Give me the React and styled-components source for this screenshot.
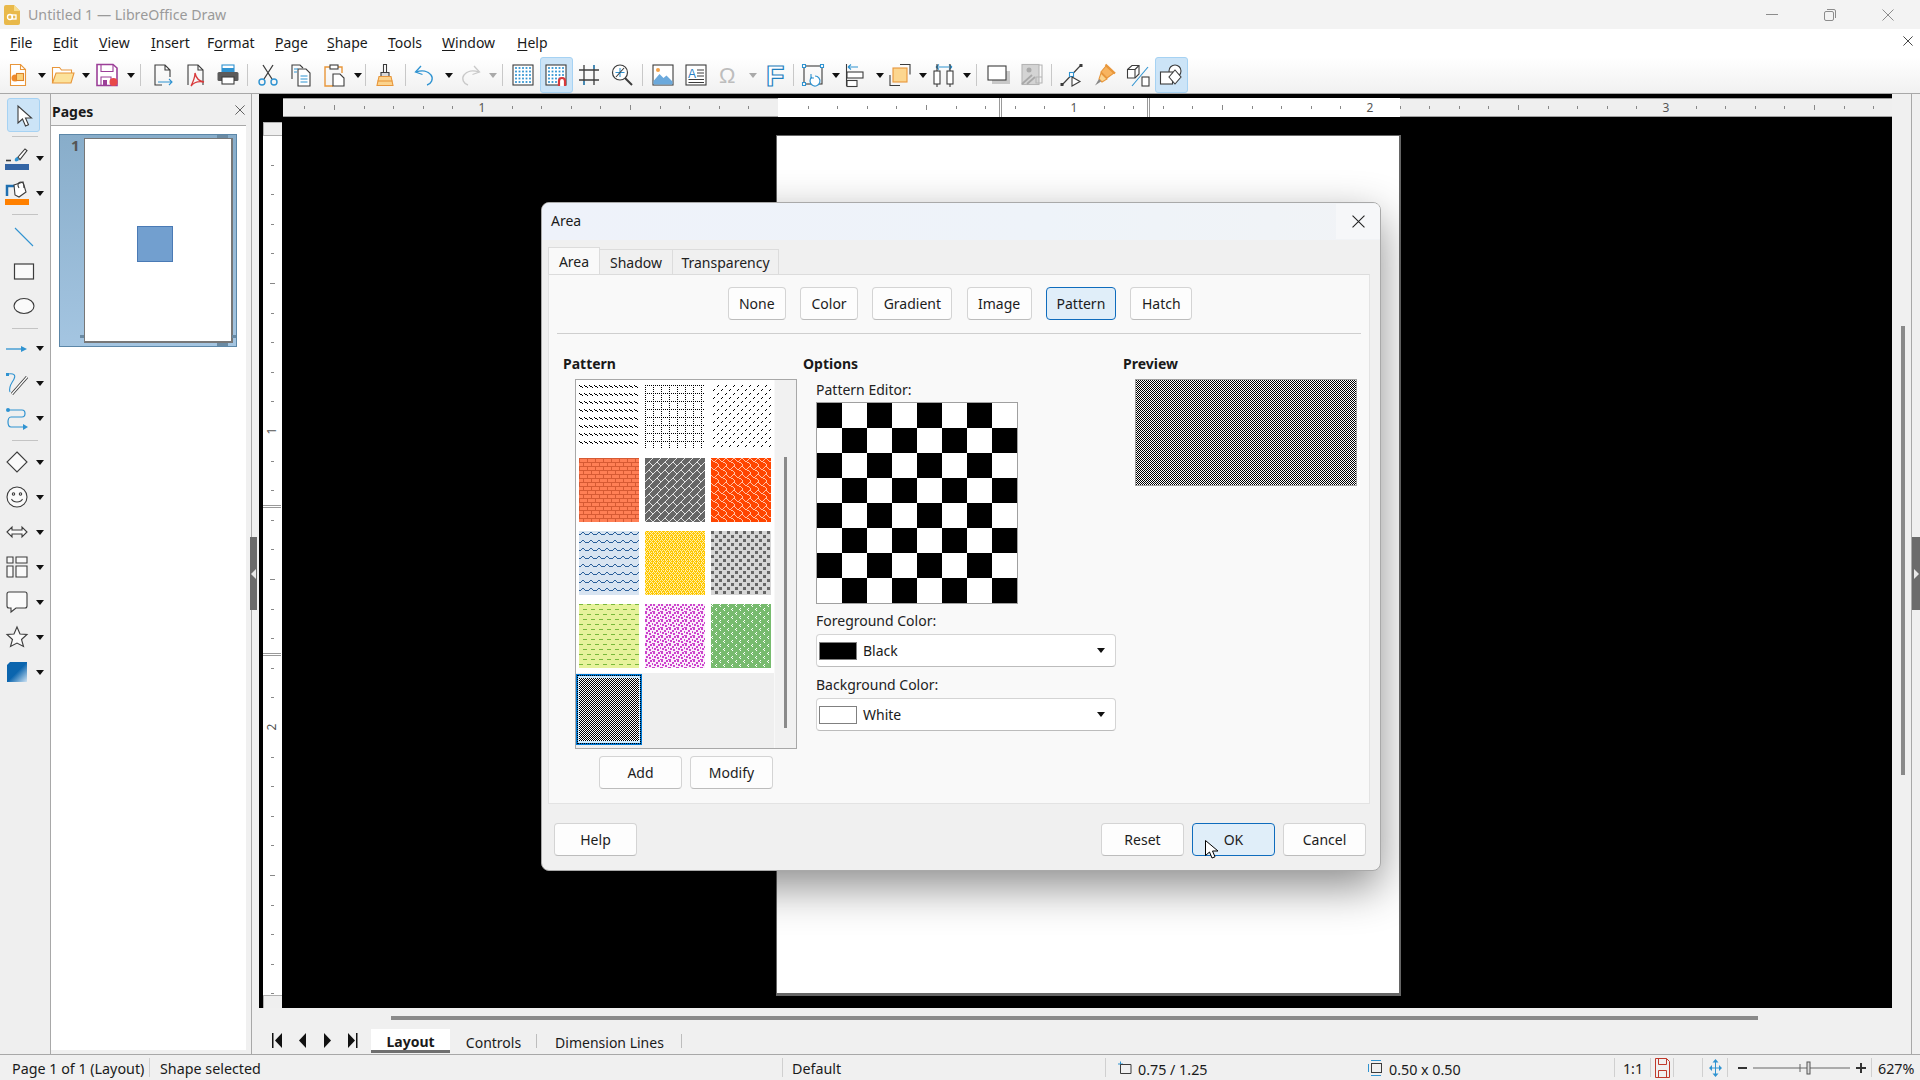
import React from 'react';
import styled, { createGlobalStyle } from 'styled-components';

const GlobalStyle = createGlobalStyle`
  html, body {
    margin: 0;
    padding: 0;
    overflow: hidden;
    background: #f0f0f0;
    font-family: "Noto Sans", "Open Sans", sans-serif;
    color: #1a1a1a;
  }
  * { box-sizing: border-box; }
`;

const DARK = '#3c3c3c';
const BLUE = '#2f93d1';
const ORANGE = '#e8963a';

const Ic = ({ children, w = 24, h = 24 }) => (
  <svg width={w} height={h} viewBox="0 0 24 24" fill="none" strokeWidth="1.1" overflow="visible">{children}</svg>
);

const dots = [];
for (let x = 5; x <= 19; x += 3.5) for (let y = 5; y <= 19; y += 3.5) dots.push([x, y]);

const GridDots = () => (
  <>
    <rect x="2" y="2" width="20" height="20" fill="#fff" stroke={DARK} />
    {dots.map(([x, y]) => <rect key={`${x}-${y}`} x={x - 0.9} y={y - 0.9} width="1.8" height="1.8" fill={BLUE} />)}
  </>
);

const icons = {
  new: <Ic><path d="M4.5 1.5h10l5 5v16h-15z" fill="#fff" stroke={ORANGE} /><path d="M14.5 1.5v5h5" stroke={ORANGE} /><circle cx="9" cy="15" r="3.5" fill="#ef8b2c" /><rect x="10.5" y="10.5" width="7" height="7" fill="#fcd27b" stroke="#dd8429" /></Ic>,
  open: <Ic><path d="M1.5 20V4.5h7l2 2.5h10v3" fill="#fff" stroke={ORANGE} /><path d="M1.5 20 5 10h18l-3 10z" fill="#fce29b" stroke={ORANGE} /></Ic>,
  save: <Ic><path d="M2 1.5h16l4 3.5v17.5H2z" fill="#fff" stroke="#9c3f98" strokeWidth="1.6" /><path d="M6 2v6.5h12V2M6 22v-8h10v8" stroke="#9c3f98" /><rect x="8" y="17" width="4" height="5" fill="#9c3f98" /><circle cx="18.5" cy="19" r="4" fill="#e8484a" /></Ic>,
  export: <Ic><path d="M12 22H5V2h10l5 5v7M15 2v5h5" stroke={DARK} /><path d="M8 19h14m-3-3 3 3-3 3" stroke={BLUE} /></Ic>,
  pdf: <Ic><path d="M5 22V2h10l5 5v15" stroke={DARK} /><path d="M15 2v5h5" stroke={DARK} /><path d="M12 10c1 5 3 8 9 9-5-1-10 0-13 4 2-4 4-8 4-13z" stroke="#d8393b" strokeWidth="1.3" /></Ic>,
  print: <Ic><rect x="6" y="2" width="12" height="7" fill="#fff" stroke={BLUE} /><path d="M6 5h12v4H6z" fill={BLUE} /><rect x="1.5" y="9" width="21" height="9" rx="1.5" fill="#5a5a5a" /><rect x="6" y="14" width="12" height="7" fill="#fff" stroke={DARK} /></Ic>,
  cut: <Ic><path d="M8 16 17 2M16 16 7 2" stroke={DARK} strokeWidth="1.3" /><circle cx="6" cy="19" r="3" stroke={BLUE} strokeWidth="1.4" /><circle cx="18" cy="19" r="3" stroke={BLUE} strokeWidth="1.4" /></Ic>,
  copy: <Ic><path d="M3 16V2h8l3 3" stroke={DARK} /><path d="M9 6h8l4 4v13H9z" fill="#fff" stroke={DARK} /><path d="M11.5 13h7M11.5 16h7M11.5 19h7M5 6h4M5 9h3" stroke={BLUE} /></Ic>,
  paste: <Ic><path d="M8 4H3v19h8" stroke={ORANGE} strokeWidth="1.4" /><path d="M16 4h4v6" stroke={ORANGE} strokeWidth="1.4" /><rect x="8" y="2" width="8" height="4" fill="#fff" stroke={DARK} /><path d="M11 11h7l4 4v8H11z" fill="#fff" stroke={DARK} /></Ic>,
  clone: <Ic><path d="M10.5 1.5h3v8h-3z" fill="#fff" stroke={DARK} /><path d="M8 9.5h8v4H8z" fill="#d9d9d9" stroke={DARK} /><path d="M6 13.5h12l2 9H4z" fill="#fbd38d" stroke={ORANGE} /><path d="M4.5 18h15" stroke={ORANGE} /></Ic>,
  undo: <Ic><path d="M8 3 2.5 9l7 2.5" stroke={BLUE} strokeWidth="1.3" /><path d="M3 9c6-2 12-1 15 3s0 9-4 10" stroke={BLUE} strokeWidth="1.3" /></Ic>,
  redo: <Ic><path d="m16 3 5.500 6-7 2.500" stroke="#c9c9c9" strokeWidth="1.3" /><path d="M21 9c-6-2-12-1-15 3s0 9 4 10" stroke="#c9c9c9" strokeWidth="1.3" /></Ic>,
  grid: <Ic><GridDots /></Ic>,
  snap: <Ic><GridDots /><path d="M15 23v-5a3 3 0 0 1 6 0v5" stroke="#d8393b" strokeWidth="2.200" fill="#fff" /></Ic>,
  help: <Ic><path d="M2 7h20M2 17h20" stroke={DARK} strokeWidth="1.300" /><path d="M7 2v20M17 2v20" stroke={DARK} strokeWidth="1.300" /><path d="M7 18v4M17 2v4" stroke={BLUE} strokeWidth="1.300" /></Ic>,
  zoom: <Ic><circle cx="10" cy="9.500" r="7.500" fill="#fff" stroke={DARK} strokeWidth="1.200" /><path d="m15 15 7 7" stroke={DARK} strokeWidth="2" /><path d="M5.500 9.500h9M10 5v9" stroke={BLUE} /><path d="m6 14 8-9" stroke={DARK} /></Ic>,
  image: <Ic><rect x="2" y="2" width="20" height="20" fill="#fff" stroke={DARK} /><circle cx="7" cy="7" r="2" fill="#f4a24a" /><path d="M2.500 21.500V18l6-7 4 4 3-2.500 6 6v3z" fill="#6ba9dc" /></Ic>,
  text: <Ic><rect x="2" y="2" width="20" height="20" fill="#fff" stroke={DARK} /><text x="4" y="15" fontFamily="Liberation Sans" fontSize="12" fill="#2a7fc4">A</text><path d="M13 7h7M13 10h7M13 13h7M4.500 16.500h15.500M4.500 19.500h15.500" stroke={DARK} /></Ic>,
  omega: <Ic><text x="2" y="20" fontFamily="Liberation Sans" fontSize="22" fill="#bdbdbd">Ω</text></Ic>,
  font: <Ic><text x="4" y="23" fontFamily="Liberation Sans" fontWeight="700" fontSize="30" fill="#fff" stroke="#1f7fbf" strokeWidth="1.200">F</text></Ic>,
  transform: <Ic><rect x="3" y="3" width="18" height="18" stroke={DARK} /><path d="M1.500 1.500h3v3h-3zM19.500 1.500h3v3h-3zM1.500 19.500h3v3h-3z" fill="#fff" stroke={BLUE} /><path d="M14 13a5 5 0 1 1-3 1" stroke={BLUE} strokeWidth="1.200" fill="#fff" /><path d="M10 11v4h3" stroke={BLUE} /></Ic>,
  align: <Ic><path d="M1.500 1v22" stroke={DARK} /><path d="M3 4h10M3 4l3-2.500M3 4l3 2.500" stroke={BLUE} /><rect x="2" y="9" width="16" height="6" fill="#fff" stroke={DARK} /><rect x="2" y="17.500" width="10" height="6" fill="#fff" stroke={DARK} /></Ic>,
  arrange: <Ic><path d="M12 1.500h10v10M2 12v10.500h10" stroke={DARK} /><rect x="5" y="5" width="14" height="14" fill="#fcd68f" stroke={ORANGE} /></Ic>,
  distribute: <Ic><rect x="2" y="8" width="6" height="13" fill="#fff" stroke={DARK} /><rect x="15" y="8" width="6" height="13" fill="#fff" stroke={DARK} /><path d="M5 21v3M18 21v3" stroke={DARK} /><path d="M4 4h16M4 4l3-2.500M4 4l3 2.500M20 4l-3-2.500M20 4l-3 2.500" stroke={BLUE} /><path d="M5 1v7M18 1v7" stroke={DARK} /></Ic>,
  shadow: <Ic><path d="M6 8h18v13H6z" fill="#c8c8c8" /><rect x="2" y="3" width="18" height="14" fill="#fff" stroke={DARK} /></Ic>,
  crop: <Ic><rect x="3" y="1.500" width="17" height="20" fill="#d4d4d4" stroke="#b5b5b5" /><path d="M3 21 13 12M8 21l8-7" stroke="#a8a8a8" strokeWidth="1.800" /><circle cx="10" cy="7" r="2.500" fill="#aaa" /><path d="M17 14h6v6h-6zM20 2h3v12" stroke="#b5b5b5" /></Ic>,
  points: <Ic><path d="M2 22 21 2" stroke={DARK} /><rect x="0.500" y="20" width="3" height="3" fill={DARK} /><rect x="19.500" y="1" width="3" height="3" fill={DARK} /><rect x="9.500" y="9.500" width="4" height="4" fill="#fff" stroke={BLUE} /><path d="M12 14v9l8-4.500z" fill="#fff" stroke={DARK} /></Ic>,
  glue: <Ic><path d="m13 3 8 7-7 5-6-6z" fill="#f8b45f" stroke={ORANGE} /><path d="m12.500 1.500 9.500 9" stroke={ORANGE} strokeWidth="2.200" /><path d="m8 10 6 6-5 3-3-3z" fill="#fbd38d" stroke={ORANGE} /><path d="m6 16-4 6.500 6-4z" fill="#888" /></Ic>,
  extrusion: <Ic><path d="M1.500 6.500 6 2.500h7v8.500l-4 4H1.500z" fill="#fff" stroke={DARK} /><path d="M1.500 6.500H9V15M9 6.500l4-4" stroke={DARK} /><path d="M22 4 6 23" stroke={BLUE} /><rect x="16" y="14" width="7" height="9" fill="#fff" stroke={DARK} /></Ic>,
  shapes: <Ic><circle cx="16" cy="8" r="6" fill="#fff" stroke={DARK} /><rect x="1.500" y="9" width="12" height="12" fill="#fff" stroke={DARK} /><path d="m16 7 6 7-6 7-6-7z" fill="#fff" stroke={DARK} /></Ic>,
  pointer: <Ic><path d="M6 2v17l4.500-4 3 7 3-1.300-3-6.700h6z" fill="#fff" stroke={DARK} /></Ic>,
  lineColor: <Ic><rect x="0" y="18" width="24" height="6" fill="#3465a4" /><path d="M1 14.500h5" stroke={DARK} strokeWidth="1.600" /><path d="M10 15c-1-2 1-4 3-4l1 3c-1 1-3 2-4 1z" fill={BLUE} /><path d="m13 11 7-8 2 1.500-7 9z" fill="#fff" stroke={DARK} /></Ic>,
  fillColor: <Ic><rect x="0" y="18" width="24" height="6" fill="#ff8000" /><path d="M2 15V5h8" stroke="#1f6fb0" strokeWidth="2.500" /><path d="M9 4 18 1l3 10-7 5-4-2z" fill="#fff" stroke={DARK} /><path d="M14 7c-2-3-1-6 2-6s3 3 3 6" stroke={DARK} /></Ic>,
  line: <Ic><path d="m3 3 18 18" stroke={BLUE} /></Ic>,
  rect: <Ic><rect x="2.500" y="4" width="19" height="15" fill="#fafafa" stroke={DARK} strokeWidth="1.200" /></Ic>,
  ellipse: <Ic><ellipse cx="12" cy="11" rx="10" ry="7.500" fill="#fafafa" stroke={DARK} strokeWidth="1.100" /></Ic>,
  arrow: <Ic><path d="M1 12h16" stroke={BLUE} strokeWidth="1.300" /><path d="m16 9 6 3-6 3z" fill={BLUE} /></Ic>,
  curve: <Ic><path d="M3 2c6-1 8 1 6 5s-6 8-4 13" stroke={BLUE} /><rect x="1" y="1" width="3" height="3" fill={BLUE} /><path d="m7 22 15-17" stroke={DARK} strokeWidth="3" /><path d="m7 22 15-17" stroke="#fff" strokeWidth="1.300" /></Ic>,
  connector: <Ic><circle cx="3" cy="3" r="2" fill={BLUE} /><path d="M3 3h14c4 0 4 7 0 7H6c-4 0-4 10 0 10h14" stroke={BLUE} strokeWidth="1.200" /><path d="m18 17 5 3-5 3z" fill={BLUE} /></Ic>,
  diamond: <Ic><path d="m12 2 10 10-10 10L2 12z" fill="#fafafa" stroke={DARK} /></Ic>,
  smile: <Ic><circle cx="12" cy="12" r="10" fill="#fafafa" stroke={DARK} /><circle cx="8.500" cy="9" r="1.200" stroke={DARK} /><circle cx="15.500" cy="9" r="1.200" stroke={DARK} /><path d="M6.500 14c2 4 9 4 11 0" stroke={DARK} /></Ic>,
  dblArrow: <Ic><path d="M2 12 7 7v3h10V7l5 5-5 5v-3H7v3z" fill="#fafafa" stroke={DARK} /></Ic>,
  flow: <Ic><path d="M2 2h6v6H2zM11 2h11v6H11zM2 11h6v11H2zM11 11h11v11H11z" fill="#fafafa" stroke={DARK} /></Ic>,
  callout: <Ic><path d="M4 2h16a2 2 0 0 1 2 2v12a2 2 0 0 1-2 2H11l-5 4v-4H4a2 2 0 0 1-2-2V4a2 2 0 0 1 2-2z" fill="#fafafa" stroke={DARK} /></Ic>,
  star: <Ic><path d="m12 2 3 7 7 .500-5.500 5 2 7L12 18l-6.500 3.500 2-7L2 9.500 9 9z" fill="#fafafa" stroke={DARK} /></Ic>,
  cube: (
    <Ic>
      <defs>
        <linearGradient id="cubeFill" x1="0" y1="0" x2="1" y2="1">
          <stop offset="0.500" stopColor="#0b65ae" />
          <stop offset="1" stopColor="#cfe3f3" />
        </linearGradient>
      </defs>
      <path d="M5 2h17v20H2V5z" fill="url(#cubeFill)" />
    </Ic>
  ),
};

const TitleBar = styled.div`
  height: 29px;
  background: #f3f3f3;
  display: flex;
  align-items: center;
  padding-left: 4px;
  flex: none;
`;
const AppTitle = styled.span`
  margin-left: 8px;
  font-size: 14.2px;
  color: #9a9a9a;
`;
const WinControls = styled.div`
  margin-left: auto;
  display: flex;
  padding-right: 3px;
`;
const WinButton = styled.div`
  width: 58px;
  height: 29px;
  display: flex;
  align-items: center;
  justify-content: center;
`;

const MenuBar = styled.div`
  height: 28px;
  background: #fff;
  display: flex;
  align-items: center;
  position: relative;
  flex: none;
  padding: 0 0 2px 3px;
`;
const MenuItem = styled.span`
  font-size: 14px;
  padding: 0 7px;
  color: #1a1a1a;
  width: ${(p) => p.$w}px;
  white-space: nowrap;
  u { text-underline-offset: 2px; text-decoration-thickness: 1px; }
`;
const DocClose = styled.div`
  position: absolute;
  right: 7px;
  top: 7px;
  display: flex;
`;

const ToolBar = styled.div`
  height: 37px;
  background: linear-gradient(#ffffff, #f1f1f1);
  border-bottom: 1px solid #a8a8a8;
  display: flex;
  align-items: center;
  padding-left: 1.500px;
  flex: none;
`;
const TBtn = styled.div`
  width: 33px;
  height: 36px;
  flex: none;
  display: flex;
  align-items: center;
  justify-content: center;
  border-radius: 3px;
  ${(p) => p.$active && 'background: #cce4f7; border: 1px solid #a6d2f3;'}
`;
const Caret = styled.div`
  width: ${(p) => p.$w || 11.500}px;
  flex: none;
  display: flex;
  justify-content: center;
  padding-left: 3px;
  &::after {
    content: "";
    border-left: 4px solid transparent;
    border-right: 4px solid transparent;
    border-top: 5px solid ${(p) => (p.$off ? '#a9a9a9' : '#111')};
  }
`;
const TSep = styled.div`
  width: 1px;
  height: 22px;
  flex: none;
  margin: 0 ${(p) => p.$m || 4.500}px;
  background: #c8c8c8;
`;

const Main = styled.div`
  flex: 1;
  display: flex;
  min-height: 0;
`;
const LeftBar = styled.div`
  width: 51px;
  flex: none;
  background: #efefef;
  border-right: 1px solid #a8a8a8;
  display: flex;
  flex-direction: column;
  padding-top: 4px;
`;
const SelectTool = styled.div`
  width: 33px;
  height: 34px;
  flex: none;
  margin-left: 7px;
  background: #cce4f7;
  border: 1px solid #a6d2f3;
  border-radius: 3px;
  display: flex;
  align-items: center;
  justify-content: center;
  padding-top: 1px;
`;
const LeftItem = styled.div`
  height: 35px;
  flex: none;
  display: flex;
  align-items: center;
  padding-left: ${(p) => (p.$center ? 12 : 5)}px;
`;
const LeftCaret = styled.div`
  margin-left: 7px;
  &::after {
    content: "";
    display: block;
    border-left: 4px solid transparent;
    border-right: 4px solid transparent;
    border-top: 5px solid #111;
  }
`;
const LeftSep = styled.div`
  height: 1px;
  flex: none;
  margin: ${(p) => p.$top}px 12px ${(p) => p.$bottom}px;
  background: #c4c4c4;
`;

const Sidebar = styled.div`
  width: 201px;
  flex: none;
  background: #f0f0f0;
  border-right: 1px solid #a8a8a8;
  display: flex;
  flex-direction: column;
`;
const SideHead = styled.div`
  height: 31px;
  display: flex;
  align-items: center;
  justify-content: space-between;
  padding: 0 6px 0 1px;
  font-size: 14px;
  font-weight: 700;
`;
const SideTitle = styled.span`
  margin-top: 3px;
`;
const SideList = styled.div`
  width: 195px;
  height: 925px;
  background: #fff;
  border-top: 1px solid #a8a8a8;
  padding: 8px 0 0 8px;
`;
const ThumbSel = styled.div`
  width: 178px;
  height: 213px;
  background: linear-gradient(#88adca, #a4c5e1);
  border: 1px solid #5c87a8;
  padding: 3px 4px 0 24px;
  position: relative;
`;
const ThumbNum = styled.span`
  position: absolute;
  left: 11px;
  top: 0;
  font-size: 15px;
  font-weight: 700;
  color: #555;
`;
const ThumbPage = styled.div`
  width: 149px;
  height: 205px;
  background: #fff;
  border: 1px solid #777;
  border-width: 1px 2px 2px 1px;
  display: flex;
  align-items: center;
  justify-content: center;
`;
const ThumbShape = styled.div`
  width: 36px;
  height: 36px;
  background: #729fcf;
  border: 1px solid #4a7ab5;
  margin: 7px 0 0 -6px;
`;
const ThumbMark = styled.div`
  position: absolute;
  left: ${(p) => p.$x}px;
  top: ${(p) => p.$y}px;
  width: ${(p) => p.$w}px;
  height: ${(p) => p.$h}px;
  background: #6a8aa3;
`;

const Workspace = styled.div`
  flex: 1;
  display: flex;
  flex-direction: column;
  padding-left: 7px;
  min-width: 0;
  background: #f0f0f0;
`;
const BlackArea = styled.div`
  height: 914px;
  background: #000;
  display: flex;
  flex-direction: column;
  padding-top: 4px;
  flex: none;
`;
const HRulerWrap = styled.div`
  margin-left: 24px;
  height: 19px;
  flex: none;
  display: flex;
`;
const CanvasRow = styled.div`
  flex: 1;
  margin-top: 5px;
  display: flex;
  padding-left: 4px;
  min-height: 0;
`;
const VRulerWrap = styled.div`
  width: 19px;
  flex: none;
  display: flex;
`;
const Canvas = styled.div`
  flex: 1;
  position: relative;
`;
const PageSheet = styled.div`
  position: absolute;
  left: 494px;
  top: 13px;
  width: 625px;
  height: 861px;
  background: #fff;
  border: 1px solid #666;
  border-width: 1px 2px 3px 1px;
`;
const HScrollRow = styled.div`
  height: 21px;
  flex: none;
  padding: 8px 0 0 132px;
`;
const HThumb = styled.div`
  width: 1367px;
  height: 4px;
  background: #8a8a8a;
`;
const TabsRow = styled.div`
  height: 25px;
  display: flex;
  flex: none;
  padding-left: 5.500px;
`;
const NavBtn = styled.div`
  width: 25px;
  display: flex;
  align-items: center;
  justify-content: center;
  padding-bottom: 3px;
`;
const SheetTab = styled.div`
  width: ${(p) => p.$w}px;
  font-size: 14px;
  display: flex;
  align-items: center;
  justify-content: center;
  ${(p) => (p.$active
    ? 'margin: 0 0 1px 6.500px; padding-top: 3px; background: #fff; font-weight: 700; border-bottom: 3px solid #6f6f6f;'
    : `padding-top: 1px; position: relative;
       &::after { content: ""; position: absolute; right: 0; top: 5px; height: 14px; width: 1px; background: #bdbdbd; }`)}
`;
const RightStrip = styled.div`
  width: 28px;
  flex: none;
  background: #f0f0f0;
  display: flex;
`;
const VScrollTrack = styled.div`
  width: 20px;
  flex: none;
  border-right: 1px solid #a8a8a8;
  padding: 232px 0 0 9px;
`;
const VThumb = styled.div`
  width: 4px;
  height: 449px;
  background: #8a8a8a;
`;
const Handle = styled.div`
  position: absolute;
  top: 537px;
  left: ${(p) => p.$left}px;
  width: ${(p) => p.$wide}px;
  height: 73px;
  background: #6b6b6b;
  display: flex;
  align-items: center;
  justify-content: center;
  &::after {
    content: "";
    border-top: 5px solid transparent;
    border-bottom: 5px solid transparent;
    ${(p) => (p.$right ? 'border-left: 5px solid #e8e8e8;' : 'border-right: 5px solid #e8e8e8;')}
  }
`;

const StatusBar = styled.div`
  height: 26px;
  flex: none;
  background: #f0f0f0;
  border-top: 1px solid #a8a8a8;
  display: flex;
  font-size: 14.3px;
  padding-top: 1px;
`;
const StatusCell = styled.div`
  width: ${(p) => p.$w}px;
  flex: none;
  display: flex;
  align-items: center;
  justify-content: ${(p) => p.$justify || 'flex-start'};
  padding-left: ${(p) => p.$pad || 0}px;
  gap: ${(p) => p.$gap || 0}px;
  position: relative;
  white-space: nowrap;
  ${(p) => !p.$noLine && `
    &::after { content: ""; position: absolute; right: 0; top: 2px; bottom: 3px; width: 1px; background: #d0d0d0; }
  `}
`;
const Coord = styled.span`
  margin-top: 3px;
`;

const Dialog = styled.div`
  position: absolute;
  left: 541px;
  top: 202px;
  width: 840px;
  height: 669px;
  background: #f0f0f0;
  border-radius: 8px;
  border: 1px solid #a9a9a9;
  box-shadow: 0 16px 44px rgba(0, 0, 0, 0.45);
  display: flex;
  flex-direction: column;
  overflow: hidden;
`;
const DlgTitle = styled.div`
  height: 37px;
  flex: none;
  display: flex;
  align-items: center;
  justify-content: space-between;
  padding-left: 9px;
  font-size: 14px;
  background: linear-gradient(90deg, #eef2fa, #eef3f9 60%, #f1f3f6);
`;
const DlgTitleText = styled.span`
  margin-bottom: 2px;
`;
const DlgClose = styled.div`
  width: 44px;
  height: 35px;
  display: flex;
  align-items: center;
  justify-content: center;
  background: #f6f7f9;
`;
const DlgBody = styled.div`
  flex: 1;
  padding: 7px 10px 0 6px;
  display: flex;
  flex-direction: column;
`;
const TabRow = styled.div`
  display: flex;
  align-items: flex-end;
  height: 27px;
  flex: none;
`;
const DlgTab = styled.div`
  width: ${(p) => p.$w}px;
  height: ${(p) => (p.$active ? 27 : 25)}px;
  background: ${(p) => (p.$active ? '#f9f9f9' : '#f0f0f0')};
  border: 1px solid #dcdcdc;
  border-bottom: none;
  border-left: ${(p) => (p.$active ? '1px solid #dcdcdc' : 'none')};
  font-size: 14px;
  display: flex;
  align-items: center;
  justify-content: center;
  color: #222;
`;
const TabPanel = styled.div`
  height: 530px;
  flex: none;
  background: #f9f9f9;
  border: 1px solid #e3e3e3;
  border-top-color: #dcdcdc;
  padding-top: 12px;
  display: flex;
  flex-direction: column;
`;
const TypeRow = styled.div`
  display: flex;
  justify-content: center;
  gap: 14.300px;
  padding-left: 2px;
`;
const Btn = styled.div`
  width: ${(p) => p.$w}px;
  height: 33px;
  flex: none;
  border-radius: 4px;
  font-size: 14px;
  display: flex;
  align-items: center;
  justify-content: center;
  color: #1c1c1c;
  background: ${(p) => (p.$active ? '#e0eef9' : '#fdfdfd')};
  border: 1px solid ${(p) => (p.$active ? '#0f6cbd' : '#d4d4d4')};
  border-bottom-color: ${(p) => (p.$active ? '#0f6cbd' : '#bcbcbc')};
`;
const HLine = styled.div`
  height: 1px;
  background: #cfcfcf;
  margin: 13px 8px 0;
  flex: none;
`;
const Columns = styled.div`
  display: grid;
  grid-template-columns: 240px 320px 1fr;
  padding: 19px 0 0 14px;
`;
const Heading = styled.div`
  height: 20px;
  display: flex;
  align-items: center;
  font-size: 14px;
  font-weight: 700;
`;
const PatternList = styled.div`
  width: 222px;
  height: 370px;
  margin: 6px 0 0 12px;
  border: 1px solid #a8a8a8;
  background: #efefef;
  display: flex;
`;
const ValueSet = styled.div`
  width: 198px;
  flex: none;
`;
const TileGrid = styled.div`
  background: #fff;
  padding: 5px 3px;
  display: grid;
  grid-template-columns: repeat(3, 60px);
  grid-auto-rows: 64px;
  gap: 9px 6px;
`;
const SelectedTile = styled.div`
  width: 66px;
  height: 71px;
  margin-top: 1px;
  border: 2px solid #0078d4;
  outline: 1px dotted #000;
  outline-offset: -2px;
  padding: 2px 1px;
  background: #cfeafc;
  display: flex;
  overflow: hidden;
`;
const ListScroll = styled.div`
  flex: 1;
  background: #f1f1f1;
  border-left: 1px solid #f8f8f8;
  padding: 77px 0 0 9px;
`;
const ListThumb = styled.div`
  width: 3px;
  height: 271px;
  background: #8a8a8a;
`;
const ListButtons = styled.div`
  display: flex;
  gap: 8px;
  margin: 7px 0 0 36px;
`;
const Options = styled.div`
  padding: 6px 0 0 13px;
`;
const FieldLabel = styled.div`
  height: 20px;
  font-size: 14px;
  display: flex;
  align-items: center;
  color: #222;
  margin-top: ${(p) => p.$mt || 0}px;
`;
const EditorGrid = styled.div`
  width: 202px;
  height: 202px;
  margin-top: 3px;
  border: 1px solid #a0a0a0;
  display: grid;
  grid-template-columns: repeat(8, 1fr);
  grid-template-rows: repeat(8, 1fr);
`;
const EditorCell = styled.div`
  background: ${(p) => (p.$on ? '#000' : '#fff')};
`;
const ColorBox = styled.div`
  width: 300px;
  height: 33px;
  margin-top: 4px;
  background: #fff;
  border: 1px solid #d4d4d4;
  border-bottom-color: #bcbcbc;
  border-radius: 4px;
  display: flex;
  align-items: center;
  padding: 0 10px 0 2px;
  font-size: 14px;
  gap: 6px;
`;
const Swatch = styled.div`
  width: 38px;
  height: 18px;
  background: ${(p) => p.$color};
  border: 1px solid #808080;
`;
const BoxCaret = styled.div`
  margin-left: auto;
  &::after {
    content: "";
    display: block;
    border-left: 4.500px solid transparent;
    border-right: 4.500px solid transparent;
    border-top: 5px solid #111;
  }
`;
const PreviewCol = styled.div`
  display: flex;
  flex-direction: column;
`;
const PreviewBox = styled.div`
  margin: 6px 0 0 12px;
  width: 222px;
  height: 107px;
  border: 1px solid #a0a0a0;
  display: flex;
`;
const DlgFooter = styled.div`
  flex: 1;
  display: flex;
  align-items: flex-start;
  padding: 19px 4px 0 6px;
  gap: 8px;
`;
const FooterSpacer = styled.div`
  flex: 1;
`;
const MouseCursor = styled.div`
  position: absolute;
  left: 1205px;
  top: 840px;
  display: flex;
`;
const Root = styled.div`
  position: relative;
  width: 1920px;
  height: 1080px;
  display: flex;
  flex-direction: column;
  overflow: hidden;
  background: #f0f0f0;
`;

// bitmaps for the pattern value set, # = foreground
const PATTERNS = [
  { id: 'p1', fg: '#000', bg: '#fff', bits: ['#....', '.##..', '...#.', '.....', '.....', '.....', '.....', '.....'] },
  { id: 'p2', fg: '#000', bg: '#fff', bits: ['#.#.#.#.', '........', '#.......', '........', '#.......', '........', '#.......', '........'] },
  { id: 'p3', fg: '#000', bg: '#fff', bits: ['.......#', '......#.', '........', '........', '...#....', '..#.....', '........', '........'] },
  { id: 'p4', fg: '#d65a33', bg: '#ff7f55', bits: ['########', '#.......', '#.......', '#.......', '########', '....#...', '....#...', '....#...'] },
  { id: 'p5', fg: '#e4e4e4', bg: '#666666', bits: ['.......#', '......#.', '.....#..', '....#...', '...##...', '..#..#..', '.#....#.', '#......#'] },
  { id: 'p6', fg: '#ffc2a8', bg: '#ff4500', bits: ['......##', '#....#..', '.#..#...', '..##....', '....##..', '......#.', '.......#', '.......#'] },
  { id: 'p7', fg: '#2a5f9a', bg: '#d8e4f1', bits: ['........', '...##...', '..#..#..', '##....##', '........', '........', '........', '........'] },
  { id: 'p8', fg: '#fff0b0', bg: '#ffc800', bits: ['#...#...', '.#.#.#.#', '..#...#.', '.#.#.#.#', '#...#...', '#.#.#.#.', '.#...#..', '#.#.#.#.'] },
  { id: 'p9', fg: '#666666', bg: '#d6d6d6', bits: ['###.....', '###.....', '###.....', '........', '....###.', '....###.', '....###.', '........'] },
  { id: 'p10', fg: '#79b93c', bg: '#e6f29b', bits: ['####....', '........', '........', '........', '........', '....####', '........', '........', '........', '........'] },
  { id: 'p11', fg: '#cc44cc', bg: '#fbeefb', bits: ['##...##.', '##...##.', '...##...', '...##..#', '.##....#', '.##.##..', '....##..', '##.....#'] },
  { id: 'p12', fg: '#ffffff', bg: '#77bb6e', bits: ['.#......', '#.......', '.#......', '........', '.....#..', '....#...', '.....#..', '........'] },
];
const CHECK = ['#.', '.#'];

const Tile = ({ id, fg, bg, bits, w = 60, h = 64 }) => (
  <svg width={w} height={h} shapeRendering="crispEdges">
    <defs>
      <pattern id={id} patternUnits="userSpaceOnUse" width={bits[0].length} height={bits.length}>
        <rect width={bits[0].length} height={bits.length} fill={bg} />
        {bits.flatMap((row, y) => [...row].map((c, x) => (c === '#' ? <rect key={`${x}-${y}`} x={x} y={y} width="1" height="1" fill={fg} /> : null)))}
      </pattern>
    </defs>
    <rect width={w} height={h} fill={`url(#${id})`} />
  </svg>
);

const HRuler = () => {
  const ticks = [];
  for (let k = -16; k <= 37; k++) ticks.push(k);
  const X = (k) => 495 + k * 29.6;
  return (
    <svg width="1609" height="19" shapeRendering="crispEdges">
      <rect width="1609" height="19" fill="#efefef" />
      <rect x="495" width="622" height="19" fill="#fff" />
      <path d="M0 0.500H495M1117 0.500H1609M0 18.500H495M1117 18.500H1609" stroke="#a0a0a0" />
      {ticks.map((k) => {
        if (k % 10 === 0 && k !== 0) {
          return <text key={k} x={X(k)} y="14" textAnchor="middle" fontSize="12" fontFamily="Noto Sans" fill="#555">{Math.abs(k / 10)}</text>;
        }
        if (k === 0) return null;
        const len = k % 5 === 0 ? 5 : 3;
        return <rect key={k} x={Math.round(X(k))} y={9 - Math.floor(len / 2)} width="1" height={len} fill="#888" />;
      })}
      <path d="M716.500 0V19M718.500 0V19M864.500 0V19M866.500 0V19" stroke="#999" />
    </svg>
  );
};

const VRuler = () => {
  const ticks = [];
  for (let k = 1; k <= 29; k++) ticks.push(k);
  const Y = (k) => 13 + k * 29.6;
  return (
    <svg width="19" height="886" shapeRendering="crispEdges">
      <rect width="19" height="886" fill="#fff" />
      <rect width="19" height="13" fill="#efefef" stroke="#b0b0b0" />
      <rect y="873" width="19" height="13" fill="#efefef" stroke="#b0b0b0" />
      {ticks.map((k) => {
        if (k % 10 === 0) {
          const y = Y(k);
          return <text key={k} x="9" y={y} transform={`rotate(-90 9 ${y})`} dy="4" textAnchor="middle" fontSize="12" fontFamily="Noto Sans" fill="#555">{k / 10}</text>;
        }
        const len = k % 5 === 0 ? 5 : 3;
        return <rect key={k} x={9 - Math.floor(len / 2)} y={Math.round(Y(k))} width={len} height="1" fill="#888" />;
      })}
      <path d="M0 383.500H18M0 385.500H18M0 531.500H18M0 533.500H18" stroke="#999" />
    </svg>
  );
};

const TOOLBAR = [
  ['b', 'new'], ['c'], ['b', 'open'], ['c'], ['b', 'save'], ['c'], ['s'],
  ['b', 'export'], ['b', 'pdf'], ['b', 'print'], ['s', 3.25],
  ['b', 'cut'], ['b', 'copy'], ['b', 'paste'], ['c'], ['s', 2.75], ['b', 'clone'], ['s', 3],
  ['b', 'undo'], ['c'], ['b', 'redo'], ['c', 0, true], ['s', 4],
  ['b', 'grid'], ['b', 'snap', true], ['b', 'help'], ['b', 'zoom'], ['s', 3.5],
  ['b', 'image'], ['b', 'text'], ['b', 'omega'], ['c', 0, true], ['b', 'font'], ['s', 2.75],
  ['b', 'transform'], ['c', 10.5], ['b', 'align'], ['c', 10.5], ['b', 'arrange'], ['c', 10.5], ['b', 'distribute'], ['c', 10.5], ['s', 5],
  ['b', 'shadow'], ['b', 'crop'], ['s', 3.5],
  ['b', 'points'], ['b', 'glue'], ['b', 'extrusion'], ['b', 'shapes', true],
];

const MENUS = [
  ['File', 0, 43], ['Edit', 0, 46], ['View', 0, 52], ['Insert', 0, 56], ['Format', 1, 68],
  ['Page', 0, 52], ['Shape', 0, 61], ['Tools', 0, 54], ['Window', 0, 75], ['Help', 0, 50],
];

const LEFT_TOOLS = [
  { sep: [4, 3.5] },
  { icon: 'lineColor', caret: true }, { icon: 'fillColor', caret: true },
  { sep: [3.5, 4] },
  { icon: 'line', center: true }, { icon: 'rect', center: true }, { icon: 'ellipse', center: true },
  { sep: [3.5, 2.5] },
  { icon: 'arrow', caret: true }, { icon: 'curve', caret: true }, { icon: 'connector', caret: true },
  { sep: [3.5, 4] },
  { icon: 'diamond', caret: true }, { icon: 'smile', caret: true }, { icon: 'dblArrow', caret: true },
  { icon: 'flow', caret: true }, { icon: 'callout', caret: true }, { icon: 'star', caret: true }, { icon: 'cube', caret: true },
];

const X = ({ size = 12, color = '#333' }) => (
  <svg width={size} height={size} viewBox="0 0 12 12"><path d="M.5.5l11 11M11.500.5l-11 11" stroke={color} strokeWidth="1" /></svg>
);

const Nav = ({ d }) => (
  <svg width="11" height="15" viewBox="0 0 11 15"><path d={d} fill="#111" /></svg>
);

export default function App() {
  const cells = [];
  for (let i = 0; i < 64; i++) cells.push(((i >> 3) + i) % 2 === 0);

  return (
    <>
      <GlobalStyle />
      <Root>
        <TitleBar>
          <svg width="16" height="20" viewBox="0 0 16 20">
            <path d="M2 0h8l6 6v12a2 2 0 0 1-2 2H2a2 2 0 0 1-2-2V2a2 2 0 0 1 2-2z" fill="#e9b94a" />
            <path d="M10 0l6 6h-6z" fill="#f7dc8c" />
            <circle cx="6" cy="12" r="2.500" fill="none" stroke="#fff" strokeWidth="1.300" />
            <rect x="8" y="10" width="4" height="4" fill="none" stroke="#fff" strokeWidth="1.300" />
          </svg>
          <AppTitle>Untitled 1 — LibreOffice Draw</AppTitle>
          <WinControls>
            <WinButton>
              <svg width="12" height="2"><rect width="12" height="1" fill="#8c8c8c" /></svg>
            </WinButton>
            <WinButton>
              <svg width="12" height="12" viewBox="0 0 12 12" fill="none" stroke="#8c8c8c"><rect x=".5" y="2.500" width="9" height="9" rx="1.500" /><path d="M3 .5h7a1.500 1.500 0 0 1 1.500 1.500v7" /></svg>
            </WinButton>
            <WinButton>
              <X size={12} color="#8c8c8c" />
            </WinButton>
          </WinControls>
        </TitleBar>

        <MenuBar>
          {MENUS.map(([name, idx, w]) => (
            <MenuItem key={name} $w={w}>
              {name.slice(0, idx)}<u>{name[idx]}</u>{name.slice(idx + 1)}
            </MenuItem>
          ))}
          <DocClose><X size={10} color="#222" /></DocClose>
        </MenuBar>

        <ToolBar>
          {TOOLBAR.map((t, i) => {
            if (t[0] === 'b') return <TBtn key={i} $active={t[2]}>{icons[t[1]]}</TBtn>;
            if (t[0] === 'c') return <Caret key={i} $w={t[1]} $off={t[2]} />;
            return <TSep key={i} $m={t[1]} />;
          })}
        </ToolBar>

        <Main>
          <LeftBar>
            <SelectTool>{icons.pointer}</SelectTool>
            {LEFT_TOOLS.map((t, i) => {
              if (t.sep) return <LeftSep key={i} $top={t.sep[0]} $bottom={t.sep[1]} />;
              return (
                <LeftItem key={t.icon} $center={t.center}>
                  {icons[t.icon]}
                  {t.caret && <LeftCaret />}
                </LeftItem>
              );
            })}
          </LeftBar>

          <Sidebar>
            <SideHead>
              <SideTitle>Pages</SideTitle>
              <X size={10} color="#444" />
            </SideHead>
            <SideList>
              <ThumbSel>
                <ThumbNum>1</ThumbNum>
                <ThumbMark $x={157} $y={0} $w={11} $h={3} />
                <ThumbMark $x={157} $y={208} $w={11} $h={3} />
                <ThumbMark $x={20} $y={200} $w={4} $h={3} />
                <ThumbMark $x={172} $y={200} $w={4} $h={3} />
                <ThumbPage><ThumbShape /></ThumbPage>
              </ThumbSel>
            </SideList>
          </Sidebar>

          <Workspace>
            <BlackArea>
              <HRulerWrap><HRuler /></HRulerWrap>
              <CanvasRow>
                <VRulerWrap><VRuler /></VRulerWrap>
                <Canvas>
                  <PageSheet />
                </Canvas>
              </CanvasRow>
            </BlackArea>
            <HScrollRow><HThumb /></HScrollRow>
            <TabsRow>
              <NavBtn><Nav d="M0 0h1.500v15H0zM10 0v15L3 7.500z" /></NavBtn>
              <NavBtn><Nav d="M9 0v15L2 7.500z" /></NavBtn>
              <NavBtn><Nav d="M2 0v15l7-7.500z" /></NavBtn>
              <NavBtn><Nav d="M1 0v15l7-7.500zM9 0h1.500v15H9z" /></NavBtn>
              <SheetTab $active $w={79}>Layout</SheetTab>
              <SheetTab $w={87}>Controls</SheetTab>
              <SheetTab $w={145}>Dimension Lines</SheetTab>
            </TabsRow>
          </Workspace>

          <RightStrip>
            <VScrollTrack><VThumb /></VScrollTrack>
          </RightStrip>
        </Main>

        <StatusBar>
          <StatusCell $w={150} $pad={12}>Page 1 of 1 (Layout)</StatusCell>
          <StatusCell $w={633} $pad={10}>Shape selected</StatusCell>
          <StatusCell $w={323} $pad={9}>Default</StatusCell>
          <StatusCell $w={254} $pad={11} $gap={5} $noLine>
            <svg width="16" height="14" viewBox="0 0 16 14" fill="none"><path d="M1 3h5M3.500.5v5" stroke={BLUE} /><path d="M3.500 3.500H14v9H3.500z" stroke={DARK} /></svg>
            <Coord>0.75 / 1.25</Coord>
          </StatusCell>
          <StatusCell $w={255} $pad={8} $gap={5}>
            <svg width="16" height="16" viewBox="0 0 16 16" fill="none"><path d="M3 .5h10M3 15.500h10M.5 4v8" stroke={BLUE} /><rect x="3.500" y="3.500" width="10" height="9" stroke={DARK} /></svg>
            <Coord>0.50 x 0.50</Coord>
          </StatusCell>
          <StatusCell $w={36} $justify="center">1:1</StatusCell>
          <StatusCell $w={23} $justify="center">
            <svg width="15" height="20" viewBox="0 0 15 20" fill="none" stroke="#c0392b"><path d="M.5.5h11l3 3v16H.5z" /><path d="M3.500.5v6h8v-6M3.500 19.500v-7h8v7" /></svg>
          </StatusCell>
          <StatusCell $w={29} />
          <StatusCell $w={25} $justify="center">
            <svg width="13" height="18" viewBox="0 0 13 18" fill={BLUE}><path d="M6.500 0 9.500 3.500h-6zM6.500 18l3-3.500h-6zM0 9l3-3v6zM13 9l-3-3v6z" /><path d="M6 3h1v12H6zM3 8.500h7v1H3z" /></svg>
          </StatusCell>
          <StatusCell $w={144} $pad={10}>
            <svg width="128" height="16" viewBox="0 0 128 16">
              <path d="M0 8h9M118 8h10M123 3v10" stroke="#333" strokeWidth="2" />
              <path d="M15 8h97" stroke="#666" strokeWidth="1" />
              <path d="M62 4v8" stroke="#666" />
              <rect x="69" y="2" width="3" height="12" fill="#ddd" stroke="#555" />
            </svg>
          </StatusCell>
          <StatusCell $w={48} $pad={6} $noLine>627%</StatusCell>
        </StatusBar>

        <Handle $left={250} $wide={7} />
        <Handle $left={1912} $wide={8} $right />

        <Dialog>
          <DlgTitle>
            <DlgTitleText>Area</DlgTitleText>
            <DlgClose><X size={13} color="#222" /></DlgClose>
          </DlgTitle>
          <DlgBody>
            <TabRow>
              <DlgTab $active $w={52}>Area</DlgTab>
              <DlgTab $w={73}>Shadow</DlgTab>
              <DlgTab $w={106}>Transparency</DlgTab>
            </TabRow>
            <TabPanel>
              <TypeRow>
                <Btn $w={58}>None</Btn>
                <Btn $w={58}>Color</Btn>
                <Btn $w={80}>Gradient</Btn>
                <Btn $w={65}>Image</Btn>
                <Btn $active $w={70}>Pattern</Btn>
                <Btn $w={62}>Hatch</Btn>
              </TypeRow>
              <HLine />
              <Columns>
                <div>
                  <Heading>Pattern</Heading>
                  <PatternList>
                    <ValueSet>
                      <TileGrid>
                        {PATTERNS.map((p) => <Tile key={p.id} {...p} />)}
                      </TileGrid>
                      <SelectedTile>
                        <Tile id="p13" fg="#000" bg="#fff" bits={CHECK} w={62} h={63} />
                      </SelectedTile>
                    </ValueSet>
                    <ListScroll><ListThumb /></ListScroll>
                  </PatternList>
                  <ListButtons>
                    <Btn $w={83}>Add</Btn>
                    <Btn $w={83}>Modify</Btn>
                  </ListButtons>
                </div>
                <div>
                  <Heading>Options</Heading>
                  <Options>
                    <FieldLabel>Pattern Editor:</FieldLabel>
                    <EditorGrid>
                      {cells.map((on, i) => <EditorCell key={i} $on={on} />)}
                    </EditorGrid>
                    <FieldLabel $mt={6}>Foreground Color:</FieldLabel>
                    <ColorBox>
                      <Swatch $color="#000" />
                      Black
                      <BoxCaret />
                    </ColorBox>
                    <FieldLabel $mt={7}>Background Color:</FieldLabel>
                    <ColorBox>
                      <Swatch $color="#fff" />
                      White
                      <BoxCaret />
                    </ColorBox>
                  </Options>
                </div>
                <PreviewCol>
                  <Heading>Preview</Heading>
                  <PreviewBox>
                    <Tile id="p14" fg="#000" bg="#fff" bits={CHECK} w={220} h={105} />
                  </PreviewBox>
                </PreviewCol>
              </Columns>
            </TabPanel>
            <DlgFooter>
              <Btn $w={83}>Help</Btn>
              <FooterSpacer />
              <Btn $w={83}>Reset</Btn>
              <Btn $active $w={83}>OK</Btn>
              <Btn $w={83}>Cancel</Btn>
            </DlgFooter>
          </DlgBody>
        </Dialog>

        <MouseCursor>
          <svg width="13" height="20" viewBox="0 0 13 20"><path d="M.5.5v15l4-3.500 2.500 6 3-1.200-2.500-5.800h5.500z" fill="#fff" stroke="#000" /></svg>
        </MouseCursor>
      </Root>
    </>
  );
}
